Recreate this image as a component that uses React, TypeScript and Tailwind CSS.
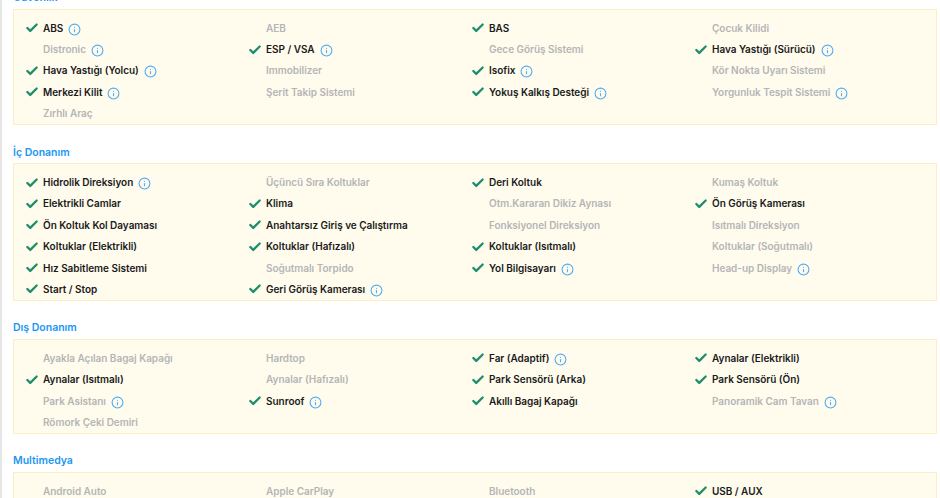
import { Check, Info } from 'lucide-react';

type Feature = { name: string; on?: boolean; info?: boolean };

const sections: { title: string; items: Feature[] }[] = [
  {
    title: 'Güvenlik',
    items: [
      { name: 'ABS', on: true, info: true },
      { name: 'AEB' },
      { name: 'BAS', on: true },
      { name: 'Çocuk Kilidi' },
      { name: 'Distronic', info: true },
      { name: 'ESP / VSA', on: true, info: true },
      { name: 'Gece Görüş Sistemi' },
      { name: 'Hava Yastığı (Sürücü)', on: true, info: true },
      { name: 'Hava Yastığı (Yolcu)', on: true, info: true },
      { name: 'Immobilizer' },
      { name: 'Isofix', on: true, info: true },
      { name: 'Kör Nokta Uyarı Sistemi' },
      { name: 'Merkezi Kilit', on: true, info: true },
      { name: 'Şerit Takip Sistemi' },
      { name: 'Yokuş Kalkış Desteği', on: true, info: true },
      { name: 'Yorgunluk Tespit Sistemi', info: true },
      { name: 'Zırhlı Araç' },
    ],
  },
  {
    title: 'İç Donanım',
    items: [
      { name: 'Hidrolik Direksiyon', on: true, info: true },
      { name: 'Üçüncü Sıra Koltuklar' },
      { name: 'Deri Koltuk', on: true },
      { name: 'Kumaş Koltuk' },
      { name: 'Elektrikli Camlar', on: true },
      { name: 'Klima', on: true },
      { name: 'Otm.Kararan Dikiz Aynası' },
      { name: 'Ön Görüş Kamerası', on: true },
      { name: 'Ön Koltuk Kol Dayaması', on: true },
      { name: 'Anahtarsız Giriş ve Çalıştırma', on: true },
      { name: 'Fonksiyonel Direksiyon' },
      { name: 'Isıtmalı Direksiyon' },
      { name: 'Koltuklar (Elektrikli)', on: true },
      { name: 'Koltuklar (Hafızalı)', on: true },
      { name: 'Koltuklar (Isıtmalı)', on: true },
      { name: 'Koltuklar (Soğutmalı)' },
      { name: 'Hız Sabitleme Sistemi', on: true },
      { name: 'Soğutmalı Torpido' },
      { name: 'Yol Bilgisayarı', on: true, info: true },
      { name: 'Head-up Display', info: true },
      { name: 'Start / Stop', on: true },
      { name: 'Geri Görüş Kamerası', on: true, info: true },
    ],
  },
  {
    title: 'Dış Donanım',
    items: [
      { name: 'Ayakla Açılan Bagaj Kapağı' },
      { name: 'Hardtop' },
      { name: 'Far (Adaptif)', on: true, info: true },
      { name: 'Aynalar (Elektrikli)', on: true },
      { name: 'Aynalar (Isıtmalı)', on: true },
      { name: 'Aynalar (Hafızalı)' },
      { name: 'Park Sensörü (Arka)', on: true },
      { name: 'Park Sensörü (Ön)', on: true },
      { name: 'Park Asistanı', info: true },
      { name: 'Sunroof', on: true, info: true },
      { name: 'Akıllı Bagaj Kapağı', on: true },
      { name: 'Panoramik Cam Tavan', info: true },
      { name: 'Römork Çeki Demiri' },
    ],
  },
  {
    title: 'Multimedya',
    items: [
      { name: 'Android Auto' },
      { name: 'Apple CarPlay' },
      { name: 'Bluetooth' },
      { name: 'USB / AUX', on: true },
    ],
  },
];

function FeatureRow({ item }: { item: Feature }) {
  return (
    <div className="flex h-[21.4px] items-center pt-[1px]">
      <span className="flex w-[29px] shrink-0 justify-end pr-[4px]">
        {item.on && <Check size={14} strokeWidth={4} className="text-[#1f8f68]" />}
      </span>
      <span className={item.on ? 'text-[#1a1a1a]' : 'text-[#b5b5b5]'}>{item.name}</span>
      {item.info && <Info size={13} strokeWidth={2} className="ml-[5px] mt-[2px] text-[#4fabf6]" />}
    </div>
  );
}

export default function App() {
  return (
    <div className="h-[498px] overflow-hidden border-l-2 border-[#e6e6e6] bg-white pl-[11px] pr-[3px] font-['Inter',sans-serif] text-[10px] font-semibold tracking-[-0.03px]">
      <div className="-mt-[29.4px] flex flex-col">
        {sections.map((section) => (
          <section key={section.title}>
            <h2 className="flex h-[38.4px] items-end pb-[3px] text-[10.5px] font-semibold tracking-normal text-[#2196f3]">{section.title}</h2>
            <div className="grid grid-cols-[repeat(4,223px)] border border-[#fdeec4] bg-[#fffcee] pt-[7px]">
              {section.items.map((item) => (
                <FeatureRow key={item.name} item={item} />
              ))}
            </div>
          </section>
        ))}
      </div>
    </div>
  );
}
